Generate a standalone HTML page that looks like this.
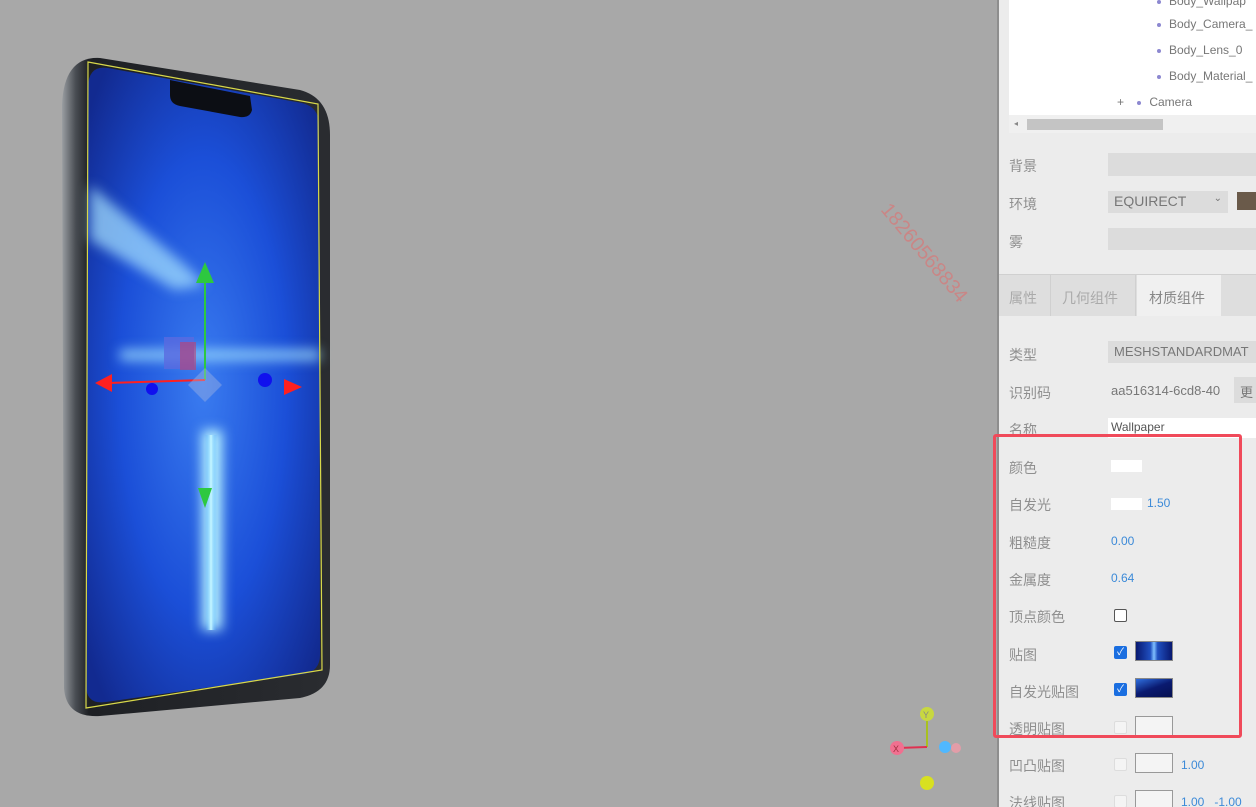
<!DOCTYPE html>
<html style="width:1256px;height:807px;overflow:hidden"><head><meta charset="utf-8">
<style>
*{margin:0;padding:0;box-sizing:border-box}
body{width:1256px;height:807px;overflow:hidden;background:#a8a8a8;font-family:"Liberation Sans","Noto Sans CJK SC",sans-serif;position:relative}
.panel{position:absolute;left:997px;top:0;width:259px;height:807px;background:#ececec;border-left:2px solid #8e8e8e;overflow:hidden}
.abs{position:absolute}
.lbl{position:absolute;left:10px;font-size:14px;color:#8f8f8f}
.tree{position:absolute;left:10px;top:0;width:249px;height:115px;background:#fff}
.ti{position:absolute;font-size:12px;color:#777}
.dot{display:inline-block;width:4px;height:4px;border-radius:2px;background:#8c88d0;margin-right:8px;vertical-align:middle}
.field{position:absolute;background:#dcdcdc}
.blue{color:#3c8ad8;font-size:12px;position:absolute}
.cb{position:absolute;width:13px;height:13px;border-radius:2px}
.tex{position:absolute;width:38px;height:20px;border:1px solid #888}
</style></head><body>
<svg class="abs" style="left:0;top:0" width="990" height="807" viewBox="0 0 990 807">
<defs>
<linearGradient id="body" x1="0" x2="1" y1="0" y2="0"><stop offset="0" stop-color="#9a9ea2"/><stop offset=".05" stop-color="#4a4e54"/><stop offset=".1" stop-color="#1e2024"/><stop offset="1" stop-color="#2a2c30"/></linearGradient>
<radialGradient id="scr" cx=".5" cy=".5" r=".65"><stop offset="0" stop-color="#3a7cf0"/><stop offset=".55" stop-color="#1b4fd8"/><stop offset="1" stop-color="#122a90"/></radialGradient>
<linearGradient id="vb" x1="0" x2="1"><stop offset="0" stop-color="#38a0ff" stop-opacity="0"/><stop offset=".5" stop-color="#c8f8ff"/><stop offset="1" stop-color="#38a0ff" stop-opacity="0"/></linearGradient>
<linearGradient id="hb" x1="0" x2="0" y1="0" y2="1"><stop offset="0" stop-color="#38a0ff" stop-opacity="0"/><stop offset=".5" stop-color="#b8f0ff"/><stop offset="1" stop-color="#38a0ff" stop-opacity="0"/></linearGradient>
<filter id="bl"><feGaussianBlur stdDeviation="6"/></filter>
</defs>
<path d="M100 58 L300 90 Q330 98 330 135 L330 665 Q330 692 300 698 L100 716 Q66 718 64 688 L62 105 Q64 56 100 58Z" fill="url(#body)"/>
<path d="M108 68 L302 103 Q319 107 319 125 L320 655 Q320 671 304 674 L106 702 Q86 705 86 685 L88 88 Q88 65 108 68Z" fill="url(#scr)"/>
<g filter="url(#bl)">
<polygon points="90,185 185,265 205,285 175,290 90,240" fill="#a8e4ff" opacity=".7"/>
<rect x="202" y="430" width="20" height="200" fill="#b8f4ff"/>
<rect x="120" y="350" width="200" height="10" fill="#a8e8ff" opacity=".8"/>
</g>
<rect x="205" y="435" width="12" height="195" fill="url(#vb)"/>
<path d="M170 80 L250 96 L252 110 Q250 118 240 117 L180 106 Q170 104 170 95Z" fill="#0c0e14"/>
<path d="M88 62 L318 104 L322 670 L86 708Z" fill="none" stroke="#d8d84a" stroke-width="1.2"/>
<line x1="205" y1="280" x2="205" y2="380" stroke="#2dc840" stroke-width="2"/>
<polygon points="205,262 196,283 214,283" fill="#2dc840"/>
<polygon points="205,508 198,488 212,488" fill="#2dc840"/>
<line x1="108" y1="383" x2="205" y2="380" stroke="#ff2020" stroke-width="2"/>
<polygon points="95,383 112,374 112,392" fill="#ff2020"/>
<polygon points="302,387 284,379 284,395" fill="#ff2020"/>
<circle cx="152" cy="389" r="6" fill="#1010ee"/><circle cx="265" cy="380" r="7" fill="#1010ee"/>
<rect x="164" y="337" width="30" height="32" fill="#5a6ae0" opacity=".8"/><rect x="180" y="342" width="16" height="28" fill="#c04070" opacity=".6"/>
<polygon points="205,368 222,385 205,402 188,385" fill="#aab8e0" opacity=".4"/>
<text x="880" y="210" transform="rotate(50 880 210)" font-family="Liberation Sans" font-size="20" fill="#e07070" opacity=".6">18260568834</text>
<line x1="927" y1="720" x2="927" y2="747" stroke="#a8c020" stroke-width="2"/>
<line x1="897" y1="748" x2="927" y2="747" stroke="#e03050" stroke-width="2"/>
<circle cx="927" cy="714" r="7" fill="#c8d840"/><text x="923" y="718" font-size="9" fill="#888">Y</text>
<circle cx="897" cy="748" r="7" fill="#f07090"/><text x="893" y="752" font-size="9" fill="#a03040">X</text>
<circle cx="945" cy="747" r="6" fill="#50b8ff"/><circle cx="956" cy="748" r="5" fill="#f09aa8" opacity=".8"/>
<circle cx="927" cy="783" r="7" fill="#d8e020"/>
</svg>
<div class="panel">
<div class="tree">
<div class="ti" style="left:148px;top:-6px"><span class="dot"></span>Body_Wallpap</div>
<div class="ti" style="left:148px;top:17px"><span class="dot"></span>Body_Camera_</div>
<div class="ti" style="left:148px;top:43px"><span class="dot"></span>Body_Lens_0</div>
<div class="ti" style="left:148px;top:69px"><span class="dot"></span>Body_Material_</div>
<div class="ti" style="left:108px;top:95px">+&nbsp;&nbsp;&nbsp;&nbsp;<span class="dot"></span>Camera</div>
</div>
<div class="abs" style="left:10px;top:115px;width:249px;height:18px;background:#f0f0f0"></div>
<div class="abs" style="left:28px;top:119px;width:136px;height:11px;background:#c4c4c4"></div>
<div class="abs" style="left:15px;top:119px;font-size:8px;color:#888">◂</div>
<div class="lbl" style="top:156px">背景</div><div class="field" style="left:109px;top:153px;width:150px;height:23px"></div>
<div class="lbl" style="top:194px">环境</div><div class="field" style="left:109px;top:191px;width:120px;height:22px;font-size:14px;color:#777;padding:2px 6px">EQUIRECT <span style="float:right;font-size:10px">⌄</span></div>
<div class="abs" style="left:238px;top:192px;width:21px;height:18px;background:#6a5a4a"></div>
<div class="lbl" style="top:232px">雾</div><div class="field" style="left:109px;top:228px;width:150px;height:22px"></div>
<div class="abs" style="left:0;top:274px;width:259px;height:42px;background:#dedede;border-top:1px solid #d0d0d0"></div>
<div class="abs" style="left:0;top:275px;width:52px;height:41px;border-right:1px solid #d0d0d0;font-size:14px;color:#aaa;padding:13px 10px">属性</div>
<div class="abs" style="left:53px;top:275px;width:84px;height:41px;border-right:1px solid #d0d0d0;font-size:14px;color:#aaa;padding:13px 10px">几何组件</div>
<div class="abs" style="left:138px;top:275px;width:84px;height:41px;background:#f0f0f0;font-size:14px;color:#888;padding:13px 12px">材质组件</div>
<div class="lbl" style="top:345px">类型</div><div class="field" style="left:109px;top:341px;width:150px;height:22px;font-size:13px;color:#777;padding:3px 6px">MESHSTANDARDMAT</div>
<div class="lbl" style="top:383px">识别码</div><div class="abs" style="left:112px;top:383px;font-size:13px;color:#777">aa516314-6cd8-40</div>
<div class="field" style="left:235px;top:377px;width:24px;height:26px;font-size:13px;color:#777;padding:5px 6px">更</div>
<div class="lbl" style="top:420px">名称</div><div class="abs" style="left:109px;top:418px;width:150px;height:20px;background:#fff;font-size:12px;color:#555;padding:2px 3px">Wallpaper</div>
<div class="lbl" style="top:458px">颜色</div><div class="abs" style="left:112px;top:460px;width:31px;height:12px;background:#fff"></div>
<div class="lbl" style="top:495px">自发光</div><div class="abs" style="left:112px;top:498px;width:31px;height:12px;background:#fff"></div><div class="blue" style="left:148px;top:496px">1.50</div>
<div class="lbl" style="top:533px">粗糙度</div><div class="blue" style="left:112px;top:534px">0.00</div>
<div class="lbl" style="top:570px">金属度</div><div class="blue" style="left:112px;top:571px">0.64</div>
<div class="lbl" style="top:607px">顶点颜色</div><div class="cb" style="left:115px;top:609px;border:1.5px solid #555;background:#fff"></div>
<div class="lbl" style="top:645px">贴图</div><div class="cb" style="left:115px;top:646px;background:#1a6ee0;color:#fff;font-size:10px;text-align:center;line-height:13px">✓</div>
<div class="tex" style="left:136px;top:641px;background:linear-gradient(90deg,#081870,#2050c0 40%,#80c0ff 50%,#2050c0 60%,#081870)"></div>
<div class="lbl" style="top:682px">自发光贴图</div><div class="cb" style="left:115px;top:683px;background:#1a6ee0;color:#fff;font-size:10px;text-align:center;line-height:13px">✓</div>
<div class="tex" style="left:136px;top:678px;background:linear-gradient(160deg,#3070e0,#0a1a70 50%,#061050)"></div>
<div class="lbl" style="top:719px">透明贴图</div><div class="cb" style="left:115px;top:721px;background:#f4f4f4;border:1px solid #ddd"></div><div class="tex" style="left:136px;top:716px;background:#f4f4f4;border-color:#999"></div>
<div class="lbl" style="top:756px">凹凸贴图</div><div class="cb" style="left:115px;top:758px;background:#f4f4f4;border:1px solid #ddd"></div><div class="tex" style="left:136px;top:753px;background:#f4f4f4;border-color:#999"></div><div class="blue" style="left:182px;top:758px">1.00</div>
<div class="lbl" style="top:793px">法线贴图</div><div class="cb" style="left:115px;top:795px;background:#f4f4f4;border:1px solid #ddd"></div><div class="tex" style="left:136px;top:790px;background:#f4f4f4;border-color:#999"></div><div class="blue" style="left:182px;top:795px">1.00&nbsp;&nbsp;&nbsp;-1.00</div>
</div>
<div class="abs" style="left:993px;top:434px;width:249px;height:304px;border:3px solid #f04a5a;border-radius:3px"></div>
</body></html>
